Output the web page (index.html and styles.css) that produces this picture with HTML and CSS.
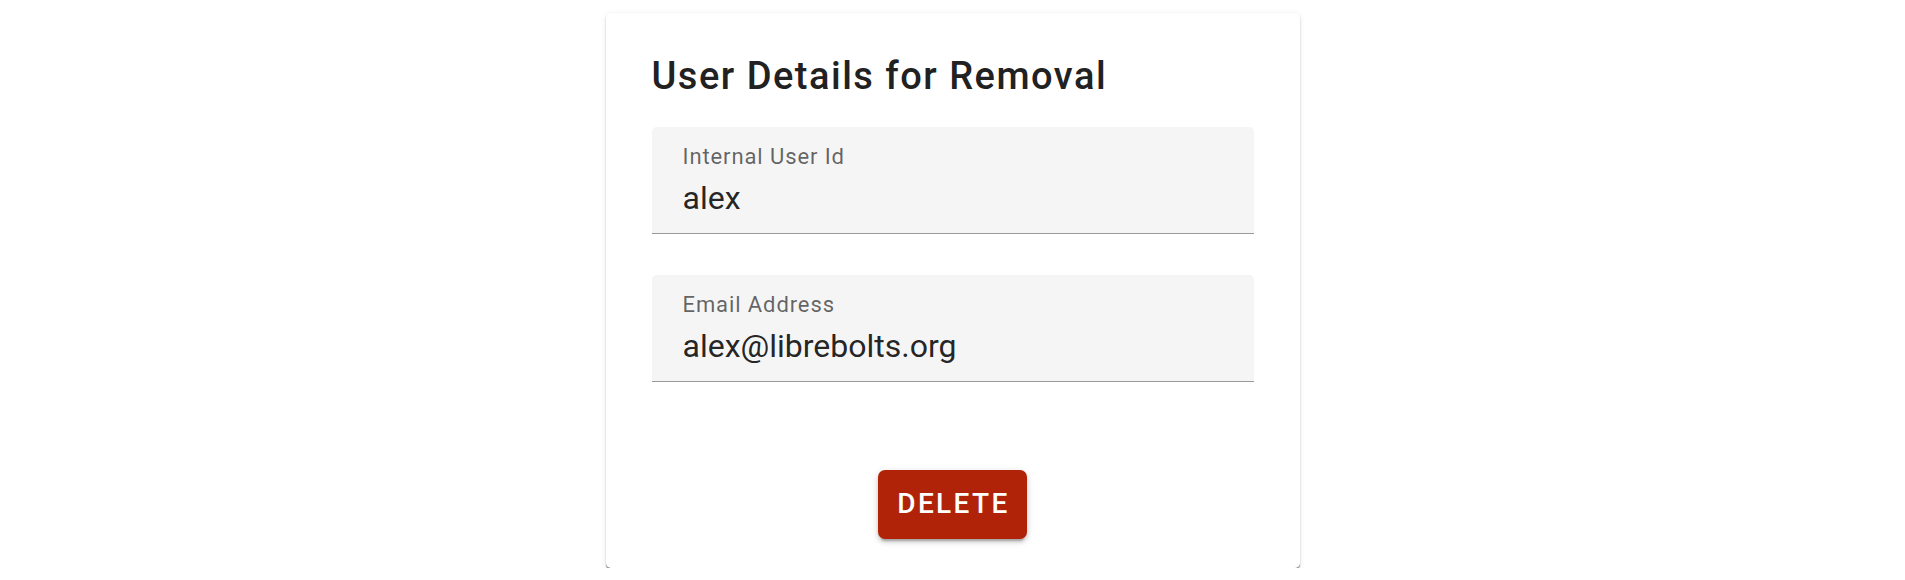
FILE: index.html
```html
<!DOCTYPE html>
<html lang="en">
<head>
<meta charset="utf-8">
<title>User Details for Removal</title>
<link rel="stylesheet" href="styles.css">
</head>
<body>
  <main class="page">
    <section class="card">
      <h1 class="title">User Details for Removal</h1>
      <div class="field">
        <label class="field-label">Internal User Id</label>
        <div class="field-value">alex</div>
      </div>
      <div class="field">
        <label class="field-label">Email Address</label>
        <div class="field-value">alex@librebolts.org</div>
      </div>
      <div class="actions">
        <button class="btn-delete" type="button">Delete</button>
      </div>
    </section>
  </main>
</body>
</html>
```
FILE: styles.css
```css
* { box-sizing: border-box; }
html, body {
  margin: 0;
  padding: 0;
  background: #ffffff;
}
body {
  font-family: Roboto, "Liberation Sans", Arial, sans-serif;
  color: rgba(0, 0, 0, 0.87);
}
.page {
  display: flex;
  justify-content: center;
  padding-top: 13px;
}
.card {
  width: 694px;
  background: #fff;
  border-radius: 5px;
  padding: 41px 46px 29px;
  box-shadow: 0 2px 1px 0 rgba(0,0,0,0.38), 0 1px 2px 0 rgba(0,0,0,0.10), 0 1px 6px 0 rgba(0,0,0,0.08);
  display: flex;
  flex-direction: column;
}
.title {
  margin: 0;
  font-size: 38px;
  line-height: 45px;
  font-weight: 500;
  letter-spacing: 1.5px;
  color: #212121;
}
.field {
  margin-top: 28px;
  background: #f5f5f5;
  border-top-left-radius: 5px;
  border-top-right-radius: 5px;
  border-bottom: 1px solid #9a9a9a;
  padding: 16px 31px 16px;
  display: flex;
  flex-direction: column;
}
.field + .field { margin-top: 41px; }
.field-label {
  font-size: 22px;
  line-height: 27px;
  letter-spacing: 0.9px;
  color: rgba(0, 0, 0, 0.6);
}
.field-value {
  margin-top: 9px;
  font-size: 32px;
  line-height: 38px;
  color: rgba(0, 0, 0, 0.87);
}
.actions {
  display: flex;
  justify-content: center;
  margin-top: 88px;
}
.btn-delete {
  font-family: Roboto, "Liberation Sans", Arial, sans-serif;
  font-size: 28px;
  line-height: 33px;
  font-weight: 500;
  letter-spacing: 2.4px;
  text-transform: uppercase;
  color: #fff;
  background: #b02308;
  border: none;
  border-radius: 7px;
  padding: 17px 17px 19px 19px;
  box-shadow: 0 5px 2px -3px rgba(0,0,0,0.2), 0 3px 4px 0 rgba(0,0,0,0.14), 0 2px 8px 0 rgba(0,0,0,0.12);
  cursor: pointer;
}
```
